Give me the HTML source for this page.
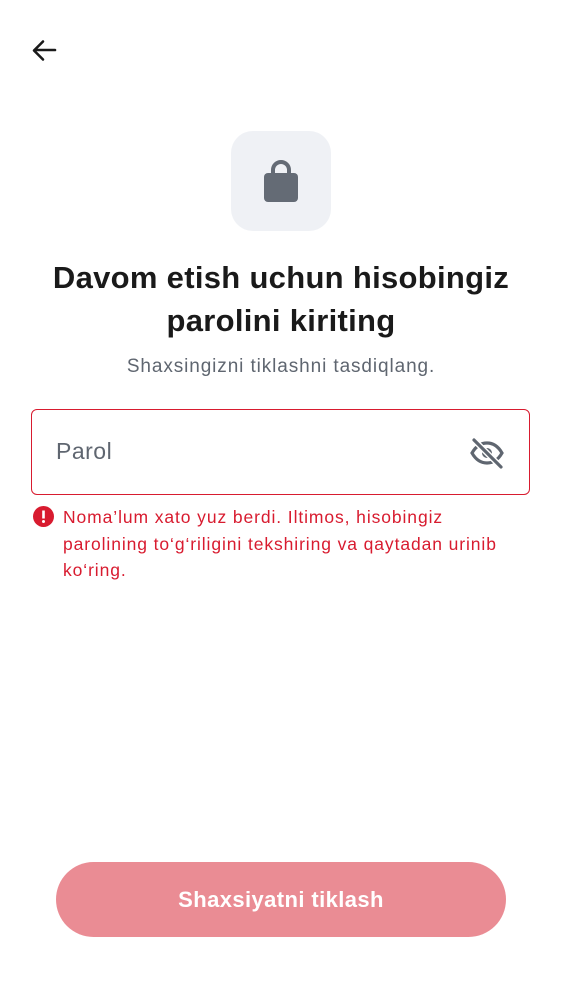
<!DOCTYPE html>
<html><head><meta charset="utf-8"><style>
body{margin:0;width:562px;height:1000px;background:#fff;font-family:"Liberation Sans",sans-serif;position:relative;overflow:hidden}
.abs{position:absolute}
</style></head><body>
<svg class="abs" style="left:28px;top:36px" width="30" height="30" viewBox="0 0 30 30"><path d="M27 14H7M15 5.5L6 14.5l9 9" stroke="#1a1a1a" stroke-width="2.6" fill="none" stroke-linecap="round" stroke-linejoin="round"/></svg>
<div class="abs" style="left:231px;top:131px;width:100px;height:100px;border-radius:22px;background:#eff1f5"></div>
<svg class="abs" style="left:261px;top:157px" width="40" height="48" viewBox="0 0 40 48"><path d="M12 20v-7a8 8 0 0 1 16 0v7" stroke="#646b75" stroke-width="4" fill="none"/><rect x="3" y="16" width="34" height="29" rx="4" fill="#646b75"/></svg>
<div class="abs" style="left:0;width:562px;top:256px;text-align:center;font-weight:bold;font-size:31px;line-height:43px;color:#1a1a1a;letter-spacing:0.3px">Davom etish uchun hisobingiz<br>parolini kiriting</div>
<div class="abs" style="left:0;width:562px;top:356px;text-align:center;font-size:19px;color:#5f6670;letter-spacing:0.9px">Shaxsingizni tiklashni tasdiqlang.</div>
<div class="abs" style="left:31px;top:409px;width:497px;height:84px;border:1.5px solid #d81b2f;border-radius:6px"></div>
<div class="abs" style="left:56px;top:438px;font-size:23px;color:#5f6670;letter-spacing:0.5px">Parol</div>
<svg class="abs" style="left:468px;top:436px" width="38" height="34" viewBox="0 0 38 34"><path d="M4 17c4-7 9-10 15-10s11 3 15 10c-4 7-9 10-15 10S8 24 4 17z" stroke="#5f6670" stroke-width="3.2" fill="none"/><circle cx="19" cy="17" r="5" fill="#5f6670"/><path d="M6 4l27 27" stroke="#fff" stroke-width="6"/><path d="M6 4l27 27" stroke="#5f6670" stroke-width="3.2" stroke-linecap="round"/></svg>
<svg class="abs" style="left:33px;top:506px" width="21" height="21" viewBox="0 0 21 21"><circle cx="10.5" cy="10.5" r="10.5" fill="#d81b2f"/><rect x="9.2" y="4.5" width="2.6" height="8" fill="#fff"/><circle cx="10.5" cy="15.5" r="1.5" fill="#fff"/></svg>
<div class="abs" style="left:63px;top:504px;width:480px;font-size:17.5px;line-height:26.5px;color:#d81b2f;letter-spacing:0.9px;white-space:nowrap">Noma’lum xato yuz berdi. Iltimos, hisobingiz<br>parolining to‘g‘riligini tekshiring va qaytadan urinib<br>ko‘ring.</div>
<div class="abs" style="left:56px;top:862px;width:450px;height:75px;border-radius:38px;background:#ea8c94;color:#fff;font-weight:bold;font-size:22px;line-height:75px;text-align:center;letter-spacing:0.4px">Shaxsiyatni tiklash</div>
</body></html>
